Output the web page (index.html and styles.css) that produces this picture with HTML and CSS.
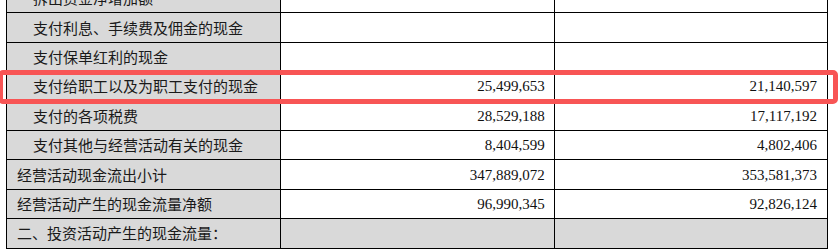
FILE: index.html
```html
<!DOCTYPE html>
<html lang="zh">
<head>
<meta charset="utf-8">
<link rel="stylesheet" href="styles.css">
</head>
<body>
<div class="sheet">
  <table class="cash">
    <colgroup>
      <col class="c-label">
      <col class="c-num">
      <col class="c-num">
    </colgroup>
    <tbody>
      <tr><td class="label sub">拆出资金净增加额</td><td class="num"></td><td class="num"></td></tr>
      <tr><td class="label sub">支付利息、手续费及佣金的现金</td><td class="num"></td><td class="num"></td></tr>
      <tr><td class="label sub">支付保单红利的现金</td><td class="num"></td><td class="num"></td></tr>
      <tr><td class="label sub">支付给职工以及为职工支付的现金</td><td class="num">25,499,653</td><td class="num">21,140,597</td></tr>
      <tr><td class="label sub">支付的各项税费</td><td class="num">28,529,188</td><td class="num">17,117,192</td></tr>
      <tr><td class="label sub">支付其他与经营活动有关的现金</td><td class="num">8,404,599</td><td class="num">4,802,406</td></tr>
      <tr><td class="label">经营活动现金流出小计</td><td class="num">347,889,072</td><td class="num">353,581,373</td></tr>
      <tr><td class="label">经营活动产生的现金流量净额</td><td class="num">96,990,345</td><td class="num">92,826,124</td></tr>
      <tr class="section"><td class="label">二、投资活动产生的现金流量：</td><td class="num"></td><td class="num"></td></tr>
    </tbody>
  </table>
  <div class="highlight"></div>
</div>
</body>
</html>
```
FILE: styles.css
```css
html, body {
  margin: 0;
  padding: 0;
  background: #ffffff;
}
.sheet {
  position: relative;
  padding-left: 6px;
  height: 249px;
  overflow: hidden;
}
.cash {
  border-collapse: collapse;
  margin-top: -17px;
  width: 822px;
  table-layout: fixed;
  font-family: "Liberation Serif", "Noto Sans CJK SC", serif;
  font-size: 15px;
  color: #111;
}
.c-label { width: 274px; }
.c-num { width: 273px; }
.cash td {
  border: 1px solid #000;
  height: 28.4px;
  padding: 0;
  line-height: 18px;
  white-space: nowrap;
}
.cash .label {
  background: #d9d9d9;
  font-family: "Noto Sans CJK SC", sans-serif;
  padding-left: 10px;
  color: #1a1a1a;
}
.cash .label.sub {
  padding-left: 26px;
}
.cash .num {
  text-align: right;
  padding-right: 9px;
}
.cash .num + .num {
  padding-right: 10px;
}
.section .num {
  background: #d9d9d9;
}
.highlight {
  position: absolute;
  left: -2px;
  top: 70px;
  width: 830px;
  height: 24px;
  border: 5px solid #f85555;
  border-radius: 5px;
  pointer-events: none;
}
```
